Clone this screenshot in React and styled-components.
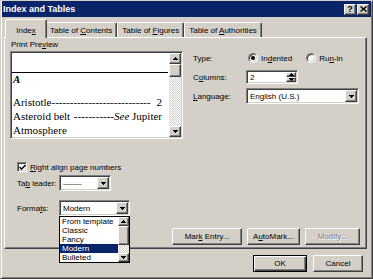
import React from "react";
import styled, { createGlobalStyle, css } from "styled-components";

const FACE = "#d4d0c8";
const SHADOW = "#808080";
const DARK = "#404040";
const NAVY = "#0a246a";

const GlobalStyle = createGlobalStyle`
  * { box-sizing: border-box; }
  body {
    margin: 0;
    background: ${FACE};
    font-family: "Liberation Sans", Arial, sans-serif;
    font-size: 8px;
    color: #000;
  }
`;

const raised = css`
  border: 1px solid;
  border-color: #fff ${DARK} ${DARK} #fff;
  box-shadow: inset -1px -1px ${SHADOW};
  background: ${FACE};
`;

const sunken = css`
  border: 1px solid;
  border-color: ${SHADOW} #fff #fff ${SHADOW};
  box-shadow: inset 1px 1px ${DARK}, inset -1px -1px ${FACE};
  padding: 1px;
  background: #fff;
`;

const Window = styled.div`
  width: 373px;
  height: 279px;
  display: flex;
  flex-direction: column;
  border: 1px solid;
  border-color: ${FACE} ${DARK} ${DARK} ${FACE};
  box-shadow: inset 1px 1px #fff, inset -1px -1px ${SHADOW};
  background: ${FACE};
  overflow: hidden;
`;

const TitleBar = styled.div`
  height: 16px;
  margin: 0 1px;
  padding: 0 2px 0 1px;
  display: flex;
  align-items: center;
  background: ${NAVY};
  color: #fff;
  font-weight: bold;
  font-size: 9px;
`;

const Caption = styled.span`
  flex: 1;
`;

const CaptionButton = styled.button`
  ${raised};
  width: 12px;
  height: 11px;
  padding: 0;
  margin-left: ${(p) => p.$gap || 0}px;
  display: flex;
  align-items: center;
  justify-content: center;
  font: bold 9px "Liberation Sans", Arial, sans-serif;
  color: #000;
`;

const Body = styled.div`
  flex: 1;
  display: flex;
  flex-direction: column;
  padding: 2px 5px 0 3px;
`;

const TabStrip = styled.div`
  display: flex;
  align-items: flex-end;
  height: 18px;
  padding-left: 3px;
  position: relative;
  z-index: 1;
`;

const Tab = styled.div`
  height: ${(p) => (p.$active ? 19 : 15)}px;
  min-width: ${(p) => (p.$active ? 42 : 38)}px;
  margin: ${(p) => (p.$active ? "0 -2px -1px" : "0")};
  padding: ${(p) => (p.$active ? "3px 6px 0" : "1px 4px 0")};
  display: flex;
  align-items: center;
  justify-content: center;
  white-space: nowrap;
  border: 1px solid;
  border-bottom: none;
  border-color: #fff ${DARK} transparent #fff;
  border-radius: 2px 2px 0 0;
  box-shadow: inset -1px 0 ${SHADOW};
  background: ${FACE};
  position: relative;
  z-index: ${(p) => (p.$active ? 1 : 0)};
`;

const Panel = styled.div`
  height: 212px;
  width: 363px;
  border: 1px solid;
  border-color: #fff ${DARK} ${DARK} #fff;
  box-shadow: inset -1px -1px ${SHADOW};
  display: flex;
  flex-direction: column;
  padding: 2px 6px 3px 5px;
`;

const TopSection = styled.div`
  display: flex;
`;

const PreviewColumn = styled.div`
  width: 173px;
  display: flex;
  flex-direction: column;
`;

const GroupLabel = styled.div`
  line-height: 9px;
  padding-left: 1px;
  margin-bottom: 2px;
`;

const PreviewBox = styled.div`
  ${sunken};
  height: 88px;
  display: flex;
`;

const PreviewPage = styled.div`
  flex: 1;
  overflow: hidden;
  padding: 0 7px 0 1px;
  font-family: "Liberation Serif", "Times New Roman", serif;
  font-size: 11px;
`;

const HeadingRule = styled.div`
  height: 1px;
  margin: 19px -6px 0 -1px;
  background: #000;
`;

const Letter = styled.div`
  line-height: 13px;
  margin-bottom: 9px;
  font-weight: bold;
  font-style: italic;
`;

const Entry = styled.div`
  display: flex;
  line-height: 14px;
  white-space: nowrap;
`;

const Leader = styled.span`
  flex: 1;
  min-width: 0;
  text-align: ${(p) => p.$align || "left"};
`;

const Page = styled.span`
  padding-left: ${(p) => p.$gap || 0}px;
`;

const ScrollBar = styled.div`
  width: ${(p) => p.$w}px;
  display: flex;
  flex-direction: column;
  background: repeating-conic-gradient(#fff 0 25%, ${FACE} 0 50%) 0 0 / 2px 2px;
`;

const ScrollButton = styled.div`
  ${raised};
  height: ${(p) => p.$h}px;
  display: flex;
  align-items: center;
  justify-content: center;
`;

const Thumb = styled.div`
  ${raised};
  height: ${(p) => p.$h}px;
`;

const Track = styled.div`
  flex: 1;
`;

const OptionsColumn = styled.div`
  margin-left: 10px;
  padding-top: 12px;
  display: flex;
  flex-direction: column;
`;

const OptionRow = styled.div`
  display: flex;
  align-items: center;
  height: ${(p) => p.$h}px;
  margin-top: ${(p) => p.$mt || 0}px;
  position: relative;
`;

const OptionLabel = styled.span`
  width: ${(p) => p.$w}px;
  flex: none;
`;

const Radio = styled.span`
  width: 10px;
  height: 10px;
  border-radius: 50%;
  border: 1px solid;
  border-color: ${SHADOW} #fff #fff ${SHADOW};
  box-shadow: inset 1px 1px ${DARK}, inset -1px -1px ${FACE};
  background: #fff;
  display: flex;
  align-items: center;
  justify-content: center;
  margin: 0 3px 0 ${(p) => p.$ml}px;
  &::after {
    content: "";
    width: 4px;
    height: 4px;
    border-radius: 50%;
    background: ${(p) => (p.$checked ? "#000" : "transparent")};
  }
`;

const Field = styled.div`
  ${sunken};
  width: ${(p) => p.$w}px;
  height: 100%;
  display: flex;
  align-items: center;
`;

const FieldText = styled.span`
  flex: 1;
  padding-left: 2px;
  white-space: nowrap;
`;

const DashText = styled(FieldText)`
  font-size: 7px;
  letter-spacing: -0.5px;
  color: #333;
`;

const SpinStack = styled.div`
  width: 10px;
  align-self: stretch;
  display: flex;
  flex-direction: column;
`;

const SpinButton = styled.div`
  ${raised};
  flex: 1;
  display: flex;
  align-items: center;
  justify-content: center;
`;

const ComboButton = styled.div`
  ${raised};
  width: 12px;
  align-self: stretch;
  display: flex;
  align-items: center;
  justify-content: center;
`;

const LowerSection = styled.div`
  flex: 1;
  display: flex;
`;

const FormColumn = styled.div`
  padding: 23px 0 0 7px;
  display: flex;
  flex-direction: column;
`;

const CheckBox = styled.span`
  ${sunken};
  width: 10px;
  height: 10px;
  padding: 0;
  margin-right: 3px;
  display: flex;
  align-items: center;
  justify-content: center;
`;

const DropList = styled.div`
  position: absolute;
  top: 100%;
  left: ${(p) => p.$left}px;
  width: ${(p) => p.$w}px;
  border: 1px solid #000;
  background: #fff;
  display: flex;
  z-index: 2;
`;

const ListItems = styled.div`
  flex: 1;
  display: flex;
  flex-direction: column;
`;

const ListItem = styled.div`
  height: 9px;
  line-height: 9px;
  padding-left: 2px;
  white-space: nowrap;
  background: ${(p) => (p.$selected ? NAVY : "transparent")};
  color: ${(p) => (p.$selected ? "#fff" : "#000")};
`;

const CommandRow = styled.div`
  margin-left: auto;
  align-self: flex-end;
  display: flex;
  gap: 5px;
`;

const PushButton = styled.button`
  ${raised};
  width: ${(p) => p.$w}px;
  height: 17px;
  padding: 0;
  font: inherit;
  color: ${(p) => (p.disabled ? SHADOW : "#000")};
  text-shadow: ${(p) => (p.disabled ? "1px 1px #fff" : "none")};
  ${(p) =>
    p.$default &&
    css`
      border-color: #000;
      box-shadow: inset 1px 1px #fff, inset -1px -1px ${DARK}, inset -2px -2px ${SHADOW};
    `}
`;

const DialogButtons = styled.div`
  display: flex;
  justify-content: flex-end;
  gap: 6px;
  margin-top: 6px;
  padding-right: 4px;
`;

const Arrow = ({ up }) => (
  <svg width="5" height="3" viewBox="0 0 5 3" shapeRendering="crispEdges">
    <polygon points={up ? "0,3 5,3 2.5,0" : "0,0 5,0 2.5,3"} fill="#000" />
  </svg>
);

const ScrollColumn = ({ w, btn, thumb }) => (
  <ScrollBar $w={w}>
    <ScrollButton $h={btn}>
      <Arrow up />
    </ScrollButton>
    <Thumb $h={thumb} />
    <Track />
    <ScrollButton $h={btn}>
      <Arrow />
    </ScrollButton>
  </ScrollBar>
);

const formats = ["From template", "Classic", "Fancy", "Modern", "Bulleted"];

export default function App() {
  return (
    <>
      <GlobalStyle />
      <Window>
        <TitleBar>
          <Caption>Index and Tables</Caption>
          <CaptionButton>?</CaptionButton>
          <CaptionButton $gap={1}>
            <svg width="7" height="6" viewBox="0 0 7 6">
              <path d="M0.5 0.5 L6.5 5.5 M6.5 0.5 L0.5 5.5" stroke="#000" strokeWidth="1.4" />
            </svg>
          </CaptionButton>
        </TitleBar>
        <Body>
          <TabStrip>
            <Tab $active>
              <span>
                Inde<u>x</u>
              </span>
            </Tab>
            <Tab>
              <span>
                Table of <u>C</u>ontents
              </span>
            </Tab>
            <Tab>
              <span>
                Table of <u>F</u>igures
              </span>
            </Tab>
            <Tab>
              <span>
                Table of <u>A</u>uthorities
              </span>
            </Tab>
          </TabStrip>
          <Panel>
            <TopSection>
              <PreviewColumn>
                <GroupLabel>
                  Print Pre<u>v</u>iew
                </GroupLabel>
                <PreviewBox>
                  <PreviewPage>
                    <HeadingRule />
                    <Letter>A</Letter>
                    <Entry>
                      <span>Aristotle</span>
                      <Leader>{"-".repeat(27)}</Leader>
                      <Page $gap={2}>2</Page>
                    </Entry>
                    <Entry>
                      <span>Asteroid belt&nbsp;</span>
                      <Leader $align="right">{"-".repeat(11)}</Leader>
                      <Page>
                        <i>See</i> Jupiter
                      </Page>
                    </Entry>
                    <Entry>
                      <span>Atmosphere</span>
                    </Entry>
                  </PreviewPage>
                  <ScrollColumn w={12} btn={11} thumb={13} />
                </PreviewBox>
              </PreviewColumn>
              <OptionsColumn>
                <OptionRow $h={12}>
                  <OptionLabel $w={53}>Type:</OptionLabel>
                  <Radio $ml={2} $checked />
                  <span>
                    In<u>d</u>ented
                  </span>
                  <Radio $ml={14} />
                  <span>
                    Ru<u>n</u>-in
                  </span>
                </OptionRow>
                <OptionRow $h={14} $mt={6}>
                  <OptionLabel $w={53}>
                    C<u>o</u>lumns:
                  </OptionLabel>
                  <Field $w={52}>
                    <FieldText>2</FieldText>
                    <SpinStack>
                      <SpinButton>
                        <Arrow up />
                      </SpinButton>
                      <SpinButton>
                        <Arrow />
                      </SpinButton>
                    </SpinStack>
                  </Field>
                </OptionRow>
                <OptionRow $h={16} $mt={4}>
                  <OptionLabel $w={53}>
                    <u>L</u>anguage:
                  </OptionLabel>
                  <Field $w={113}>
                    <FieldText>English (U.S.)</FieldText>
                    <ComboButton>
                      <Arrow />
                    </ComboButton>
                  </Field>
                </OptionRow>
              </OptionsColumn>
            </TopSection>
            <LowerSection>
              <FormColumn>
                <OptionRow $h={10}>
                  <CheckBox>
                    <svg width="7" height="7" viewBox="0 0 7 7">
                      <path d="M0.5 3 L2.5 5.2 L6.5 1" fill="none" stroke="#000" strokeWidth="1.5" />
                    </svg>
                  </CheckBox>
                  <span>
                    <u>R</u>ight align page numbers
                  </span>
                </OptionRow>
                <OptionRow $h={16} $mt={3}>
                  <OptionLabel $w={42}>
                    Ta<u>b</u> leader:
                  </OptionLabel>
                  <Field $w={52}>
                    <DashText>----------</DashText>
                    <ComboButton>
                      <Arrow />
                    </ComboButton>
                  </Field>
                </OptionRow>
                <OptionRow $h={16} $mt={9}>
                  <OptionLabel $w={42}>
                    Forma<u>t</u>s:
                  </OptionLabel>
                  <Field $w={71}>
                    <FieldText>Modern</FieldText>
                    <ComboButton>
                      <Arrow />
                    </ComboButton>
                  </Field>
                  <DropList $left={42} $w={71}>
                    <ListItems>
                      {formats.map((f) => (
                        <ListItem key={f} $selected={f === "Modern"}>
                          {f}
                        </ListItem>
                      ))}
                    </ListItems>
                    <ScrollColumn w={11} btn={9} thumb={19} />
                  </DropList>
                </OptionRow>
              </FormColumn>
              <CommandRow>
                <PushButton $w={70}>
                  Mar<u>k</u> Entry...
                </PushButton>
                <PushButton $w={53}>
                  A<u>u</u>toMark...
                </PushButton>
                <PushButton $w={55} disabled>
                  Modify...
                </PushButton>
              </CommandRow>
            </LowerSection>
          </Panel>
          <DialogButtons>
            <PushButton $w={54} $default>
              OK
            </PushButton>
            <PushButton $w={50}>Cancel</PushButton>
          </DialogButtons>
        </Body>
      </Window>
    </>
  );
}
